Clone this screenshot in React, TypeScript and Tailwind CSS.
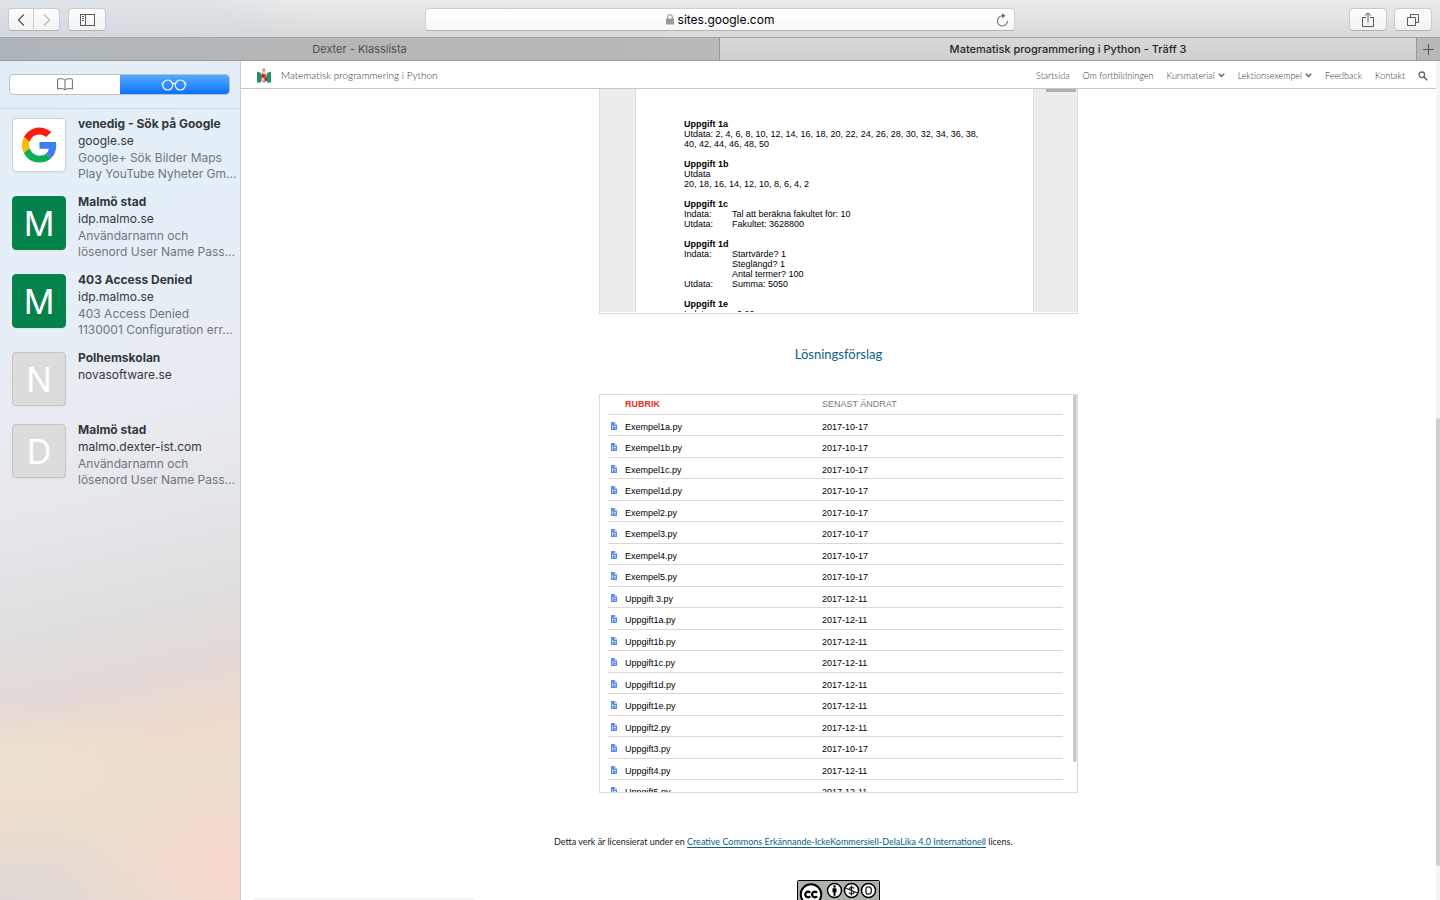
import type { ReactNode } from "react";
import { ChevronLeft, ChevronRight, Plus } from "lucide-react";

type ReadingItem = {
    title: string;
    host: string;
    lines: string[];
    tile: "google" | "green" | "gray";
    letter?: string;
};

const READING_LIST: ReadingItem[] = [
    {
        title: "venedig - Sök på Google",
        host: "google.se",
        lines: ["Google+ Sök Bilder Maps", "Play YouTube Nyheter Gm…"],
        tile: "google",
    },
    {
        title: "Malmö stad",
        host: "idp.malmo.se",
        lines: ["Användarnamn och", "lösenord User Name Pass…"],
        tile: "green",
        letter: "M",
    },
    {
        title: "403 Access Denied",
        host: "idp.malmo.se",
        lines: ["403 Access Denied", "1130001 Configuration err…"],
        tile: "green",
        letter: "M",
    },
    { title: "Polhemskolan", host: "novasoftware.se", lines: [], tile: "gray", letter: "N" },
    {
        title: "Malmö stad",
        host: "malmo.dexter-ist.com",
        lines: ["Användarnamn och", "lösenord User Name Pass…"],
        tile: "gray",
        letter: "D",
    },
];

const NAV = [
    { label: "Startsida" },
    { label: "Om fortbildningen" },
    { label: "Kursmaterial", menu: true },
    { label: "Lektionsexempel", menu: true },
    { label: "Feedback" },
    { label: "Kontakt" },
];

const FILES = [
    ["Exempel1a.py", "2017-10-17"],
    ["Exempel1b.py", "2017-10-17"],
    ["Exempel1c.py", "2017-10-17"],
    ["Exempel1d.py", "2017-10-17"],
    ["Exempel2.py", "2017-10-17"],
    ["Exempel3.py", "2017-10-17"],
    ["Exempel4.py", "2017-10-17"],
    ["Exempel5.py", "2017-10-17"],
    ["Uppgift 3.py", "2017-12-11"],
    ["Uppgift1a.py", "2017-12-11"],
    ["Uppgift1b.py", "2017-12-11"],
    ["Uppgift1c.py", "2017-12-11"],
    ["Uppgift1d.py", "2017-12-11"],
    ["Uppgift1e.py", "2017-12-11"],
    ["Uppgift2.py", "2017-12-11"],
    ["Uppgift3.py", "2017-10-17"],
    ["Uppgift4.py", "2017-12-11"],
    ["Uppgift5.py", "2017-12-11"],
];

function ToolbarButton({ label, className, children }: { label: string; className: string; children: ReactNode }) {
    return (
        <button
            aria-label={label}
            className={`flex h-[23px] items-center justify-center border border-[#c9cbcc] border-b-[#b0b2b3] bg-linear-to-b from-[#fdfdfd] to-[#f1f2f2] ${className}`}
        >
            {children}
        </button>
    );
}

function Toolbar() {
    return (
        <header className="grid h-[38px] shrink-0 grid-cols-[1fr_minmax(0,590px)_1fr] items-center border-b border-[#a4a6a8] bg-[linear-gradient(90deg,rgba(200,216,228,0.4)_0%,rgba(200,216,228,0.35)_14%,transparent_22%),linear-gradient(180deg,#ebebeb,#d9d9d9)] px-2 pt-0.5">
            <div className="flex gap-2">
                <div className="flex">
                    <ToolbarButton label="Bakåt" className="w-[26px] rounded-l text-[#5c5c5c]">
                        <ChevronLeft size={20} strokeWidth={1.7} />
                    </ToolbarButton>
                    <ToolbarButton label="Framåt" className="w-[26px] rounded-r border-l-0 text-[#bdbdbd]">
                        <ChevronRight size={20} strokeWidth={1.7} />
                    </ToolbarButton>
                </div>
                <ToolbarButton label="Visa sidofält" className="w-[38px] rounded text-[#5c5c5c]">
                    <svg width="15" height="12" viewBox="0 0 15 12" fill="none" stroke="currentColor">
                        <rect x="0.5" y="0.5" width="14" height="11" />
                        <path d="M5.500.5v11M2 2.500h2M2 4.500h2M2 6.500h2" />
                    </svg>
                </ToolbarButton>
            </div>
            <div className="flex h-[23px] items-center rounded border border-[#cfcfcf] border-b-[#b2b2b2] bg-linear-to-b from-white to-[#f7f7f7] px-1">
                <div className="w-4" />
                <button className="flex flex-1 items-center justify-center gap-1 text-xs text-black">
                    <svg width="8" height="11" viewBox="0 0 8 11" fill="none">
                        <rect y="4.5" width="8" height="6" rx="0.6" fill="#999" />
                        <path d="M1.7 5V3a2.3 2.3 0 0 1 4.6 0v2" stroke="#999" strokeWidth="1.1" />
                    </svg>
                    sites.google.com
                </button>
                <button aria-label="Läs in igen" className="flex w-4 justify-center">
                    <svg width="13" height="14" viewBox="0 0 13 14" fill="none" stroke="#777" strokeWidth="1.1">
                        <path d="M6.5 2.800A5.100 5.100 0 1 0 11.600 7.800" />
                        <path d="M6 .3v5l3.600-2.500z" fill="#666" stroke="none" />
                    </svg>
                </button>
            </div>
            <div className="flex justify-end gap-[7px]">
                <ToolbarButton label="Dela" className="w-[38px] rounded text-[#5c5c5c]">
                    <svg width="12" height="16" viewBox="0 0 12 16" fill="none" stroke="currentColor">
                        <path d="M4 5.500H.5v9h11v-9H8M6 10.500V1M3 3.800l3-3 3 3" />
                    </svg>
                </ToolbarButton>
                <ToolbarButton label="Visa alla flikar" className="w-[38px] rounded text-[#5c5c5c]">
                    <svg width="12" height="12" viewBox="0 0 12 12" fill="none" stroke="currentColor">
                        <path d="M.5 3.500h8v8h-8zM3.500 3.500v-3h8v8h-3" />
                    </svg>
                </ToolbarButton>
            </div>
        </header>
    );
}

function TabBar() {
    return (
        <nav className="flex h-[23px] shrink-0 border-b border-[#999] text-[11px]">
            <button className="flex-1 bg-linear-to-r from-[#aeb5ba] via-[#b6b6b6] via-45% to-[#b9b9b9] text-[#505050]">
                Dexter - Klasslista
            </button>
            <button className="w-[697px] border-l border-[#999] bg-linear-to-b from-[#d8d8d8] to-[#d0d0d0] font-medium text-[#262626]">
                Matematisk programmering i Python - Träff 3
            </button>
            <button
                aria-label="Ny flik"
                className="flex w-6 items-center justify-center border-l border-[#999] bg-[#b8b8b8] text-[#555]"
            >
                <Plus size={17} strokeWidth={1.5} />
            </button>
        </nav>
    );
}

function GoogleLogo() {
    return (
        <svg width="35" height="36" viewBox="0 0 48 48">
            <path fill="#fb1c0d" d="M24 9.5c3.5 0 6.7 1.2 9.2 3.6l6.9-6.9A24 24 0 0 0 2.6 13.2l8 6.2A14.3 14.3 0 0 1 24 9.5z" />
            <path fill="#3f7df5" d="M47 24.6c0-1.6-.2-3.1-.4-4.6H24v9h12.9a11 11 0 0 1-4.8 7.2l7.7 6c4.5-4.2 7.2-10.3 7.2-17.6z" />
            <path fill="#fbbc05" d="M10.5 28.6a14.500 14.500 0 0 1 0-9.200l-8-6.200a24 24 0 0 0 0 21.600z" />
            <path fill="#0cae50" d="M24 48c6.500 0 11.900-2.100 15.900-5.800l-7.700-6A14.300 14.300 0 0 1 10.500 28.600l-8 6.200A24 24 0 0 0 24 48z" />
        </svg>
    );
}

function Tile({ item }: { item: ReadingItem }) {
    const tones = {
        google: "border-[#cdd3d8] bg-white",
        green: "border-[#157e50] bg-[#04824b] text-white",
        gray: "border-[#c4c4c6] bg-[#dcdcdc] text-white",
    };
    return (
        <div
            className={`mt-[3px] flex size-[54px] shrink-0 items-center justify-center rounded border text-[34px] shadow-xs ${tones[item.tile]}`}
        >
            {item.tile === "google" ? <GoogleLogo /> : item.letter}
        </div>
    );
}

function Sidebar() {
    return (
        <aside className="w-[241px] shrink-0 overflow-hidden border-r border-[#c9cdd2] bg-[radial-gradient(ellipse_170px_110px_at_100%_96%,#f7d9cc_0%,transparent_100%),radial-gradient(ellipse_200px_90px_at_0%_100%,#e0d8d6_0%,transparent_100%),radial-gradient(ellipse_170px_60px_at_10%_84%,#ece2ce_0%,transparent_100%),linear-gradient(167deg,#e2eef7_0%,#e6eff7_25%,#e9ecf2_42%,#e4e5ea_55%,#dfdddc_66%,#e4d9d6_73%,#efdacb_80%,#ebdecd_87%,#e9dcd0_100%)]">
            <div className="flex h-12 items-center border-b border-[#cbd8e2] pr-2.5 pl-[9px]">
                <div className="flex h-[21px] flex-1 overflow-hidden rounded border border-[#b9c2c9] bg-white">
                    <button aria-label="Bokmärken" className="flex flex-1 items-center justify-center">
                        <svg width="16" height="13" viewBox="0 0 16 13" fill="none" stroke="#666">
                            <path d="M8 2.200C6.500.5 3 .3.600 1.300v9.800c2.400-1 5.900-.8 7.400.9 1.500-1.700 5-1.900 7.400-.9V1.300C13 .3 9.500.5 8 2.200zM8 2.200V12" />
                        </svg>
                    </button>
                    <button
                        aria-label="Läslista"
                        className="flex flex-1 items-center justify-center bg-linear-to-b from-[#54a9fb] to-[#0570fe]"
                    >
                        <svg width="26" height="12" viewBox="0 0 26 12" fill="none" stroke="#fff" strokeWidth="1.2">
                            <circle cx="6.700" cy="6" r="5" />
                            <circle cx="19.300" cy="6" r="5" />
                            <path d="M11.500 5c.8-.9 2.200-.9 3 0M1.700 5H.3M24.300 5h1.400" />
                        </svg>
                    </button>
                </div>
            </div>
            <ul className="flex flex-col gap-[11px] pt-1.5 pl-3">
                {READING_LIST.map((item, i) => (
                    <li key={i} className="min-h-[61px]">
                        <a href="#" className="flex gap-3 whitespace-nowrap">
                            <Tile item={item} />
                            <div className="text-xs leading-4 text-[#70757a]">
                                <p className="leading-[17px] font-bold text-[#33373b]">{item.title}</p>
                                <p className="leading-[18px] text-[#33373b]">{item.host}</p>
                                {item.lines.map((line) => (
                                    <p key={line}>{line}</p>
                                ))}
                            </div>
                        </a>
                    </li>
                ))}
            </ul>
        </aside>
    );
}

function SiteLogo() {
    return (
        <svg width="14" height="15" viewBox="0 0 14 15">
            <path fill="#16976a" d="M0 3.500 4 5v9.500H0zM14 3.500 10 5v9.500h4z" />
            <path fill="#c9635c" d="M4 7l2-1.500h2.500L10 8v4.500L7 14.500l-3-2z" />
            <path fill="#d98c83" d="M5 1.500 7 0l1.500 1.500L8 4.500H6z" />
            <path fill="#d9162c" d="m5 5 3 2.500-1 2.500-2.500-1zM8 9l2 1.500v2L8 13z" />
            <path fill="#f6e3de" d="M6.500 3.500h1.500v2H6.500zM4.500 10.500l2-1 1 3-2 .5z" />
        </svg>
    );
}

function SiteHeader() {
    return (
        <header className="flex h-7 shrink-0 items-center border-b border-[#c6c6c6] bg-white pt-0.5 pr-2 pl-4 font-[Lato] text-[10px] font-light text-[#333]">
            <a href="#" className="flex items-center gap-2.5">
                <SiteLogo />
                Matematisk programmering i Python
            </a>
            <nav className="ml-auto flex items-center gap-[13px] text-[9px] text-[#333]">
                {NAV.map((item) => (
                    <a key={item.label} href="#" className="flex items-center gap-[3px]">
                        {item.label}
                        {item.menu && (
                            <svg width="7" height="5" viewBox="0 0 7 5" fill="none" stroke="#666" strokeWidth="1.500">
                                <path d="m.8.8 2.700 2.700L6.200.8" />
                            </svg>
                        )}
                    </a>
                ))}
                <button aria-label="Sök">
                    <svg width="10" height="10" viewBox="0 0 10 10" fill="none" stroke="#666" strokeWidth="1.300">
                        <circle cx="3.800" cy="3.800" r="2.800" />
                        <path d="m6 6 3.200 3.200" strokeWidth="1.600" />
                    </svg>
                </button>
            </nav>
        </header>
    );
}

function Task({ name, children }: { name: string; children: ReactNode }) {
    return (
        <section>
            <h3 className="font-bold">{name}</h3>
            {children}
        </section>
    );
}

function Row({ label, children }: { label?: string; children: ReactNode }) {
    return (
        <div className="flex">
            <span className="w-12">{label}</span>
            <span>{children}</span>
        </div>
    );
}

function DocumentEmbed() {
    return (
        <div className="flex h-[225px] w-full border border-t-0 border-[#dcdcdc] bg-white pb-px">
            <div className="w-[35px] bg-[#ededed]" />
            <div className="flex flex-1 flex-col gap-2.5 overflow-hidden border-x border-[#dedede] bg-white px-12 pt-[30px] text-[9px] leading-[10px] text-black">
                <Task name="Uppgift 1a">
                    <p>Utdata: 2, 4, 6, 8, 10, 12, 14, 16, 18, 20, 22, 24, 26, 28, 30, 32, 34, 36, 38,</p>
                    <p>40, 42, 44, 46, 48, 50</p>
                </Task>
                <Task name="Uppgift 1b">
                    <p>Utdata</p>
                    <p>20, 18, 16, 14, 12, 10, 8, 6, 4, 2</p>
                </Task>
                <Task name="Uppgift 1c">
                    <Row label="Indata:">Tal att beräkna fakultet för: 10</Row>
                    <Row label="Utdata:">Fakultet: 3628800</Row>
                </Task>
                <Task name="Uppgift 1d">
                    <Row label="Indata:">Startvärde? 1</Row>
                    <Row>Steglängd? 1</Row>
                    <Row>Antal termer? 100</Row>
                    <Row label="Utdata:">Summa: 5050</Row>
                </Task>
                <Task name="Uppgift 1e">
                    <Row label="Indata:">&nbsp;&nbsp;0,90</Row>
                </Task>
            </div>
            <div className="flex w-[43px] justify-end bg-[#ededed] pr-px">
                <div className="h-[3px] w-[30px] bg-[#b0b0b0]" />
            </div>
        </div>
    );
}

function FileIcon() {
    return (
        <svg width="6" height="8" viewBox="0 0 6 8">
            <path fill="#5a8aea" d="M0 0h3.800L6 2.400V8H0z" />
            <path fill="#d3e0fa" d="M3.500 0v2.700H6zM1.200 3h1v3.800h-1zM3 4h2v.9H3zM3.800 5.800H5v.9H3.800z" />
        </svg>
    );
}

function FileList() {
    return (
        <div className="flex h-[399px] w-full overflow-hidden border border-[#dcdcdc] bg-white pl-2">
            <table className="h-fit flex-1 table-fixed border-collapse text-left text-[9px] leading-[10px] text-black">
                <thead>
                    <tr className="h-[19px] border-b border-[#d9d9d9]">
                        <th className="w-[17px] p-0" />
                        <th className="w-[197px] p-0 font-bold text-[#ef2b1d]">RUBRIK</th>
                        <th className="p-0 font-normal text-[#777]">SENAST ÄNDRAT</th>
                    </tr>
                </thead>
                <tbody>
                    {FILES.map(([name, date]) => (
                        <tr key={name} className="border-b border-[#d9d9d9] odd:h-[21px] even:h-[22px]">
                            <td className="p-0 pt-0.5 pl-[3px]">
                                <FileIcon />
                            </td>
                            <td className="p-0 pt-1">{name}</td>
                            <td className="p-0 pt-1">{date}</td>
                        </tr>
                    ))}
                </tbody>
            </table>
            <div className="ml-2.5 h-[367px] w-1 rounded-b border-r border-[#e0e0e0] bg-[#c8c8c8]" />
        </div>
    );
}

function LicenseBadge() {
    return (
        <svg width="83" height="29" viewBox="0 0 83 29" className="shrink-0">
            <rect x="0.500" y="0.500" width="82" height="28" rx="1" fill="#abb3ab" stroke="#000" />
            <rect x="1" y="21" width="81" height="8" fill="#000" />
            <circle cx="14" cy="14.500" r="10.300" fill="#fff" stroke="#000" strokeWidth="2" />
            <g fill="none" stroke="#000" strokeWidth="2.300">
                <path d="M13.200 12.700a2.800 2.800 0 1 0 0 3.600M20 12.700a2.800 2.800 0 1 0 0 3.600" />
            </g>
            <g fill="#fff" stroke="#000" strokeWidth="1.500">
                <circle cx="37.500" cy="10.500" r="7" />
                <circle cx="54.500" cy="10.500" r="7" />
                <circle cx="71.500" cy="10.500" r="7" />
            </g>
            <circle cx="37.500" cy="6.500" r="1.300" />
            <path d="M35.500 8.300h4v4h-1v3.500h-2v-3.500h-1z" />
            <g fill="none" stroke="#222" strokeWidth="1.300">
                <path d="M57 8.500c-1-1.500-4.500-1.500-4.500.4 0 2.200 4.500 1.200 4.500 3.500 0 2-3.800 2-5 .3M54.500 5.500v10M48.500 8l12 5" />
                <path d="M69 8.500c.6-2.500 5.500-2.500 5.500 2s-5 4.500-5.500 2z" />
            </g>
        </svg>
    );
}

export default function App() {
    return (
        <div className="flex h-screen flex-col overflow-hidden bg-white font-['Inter',sans-serif]">
            <Toolbar />
            <TabBar />
            <div className="flex min-h-0 flex-1">
                <Sidebar />
                <div className="relative flex min-w-0 flex-1 flex-col">
                    <SiteHeader />
                    <main className="mx-auto flex w-[479px] flex-1 flex-col items-center font-['Liberation_Sans',sans-serif]">
                        <DocumentEmbed />
                        <h2 className="my-[30px] font-[Lato] text-[13px] leading-5 text-[#0b6187]">Lösningsförslag</h2>
                        <FileList />
                        <p className="mt-10 w-[569px] font-[Lato] text-[9px] leading-[18px] text-[#212121]">
                            Detta verk är licensierat under en{" "}
                            <a href="#" className="text-[#0b6187] underline underline-offset-2">
                                Creative Commons Erkännande-IckeKommersiell-DelaLika 4.0 Internationell
                            </a>{" "}
                            licens.
                        </p>
                        <div className="mt-[29px]">
                            <LicenseBadge />
                        </div>
                    </main>
                    {/* edge of the notice that slides up from the bottom */}
                    <div className="absolute bottom-0 left-3 h-0.5 w-[222px] rounded-t bg-[#f4f4f4]" />
                </div>
                {/* page scrollbar */}
                <div className="flex w-1 shrink-0 flex-col bg-[#f5f5f5] pt-[357px]">
                    <div className="h-[448px] rounded bg-[#cfcfcf]" />
                </div>
            </div>
        </div>
    );
}
